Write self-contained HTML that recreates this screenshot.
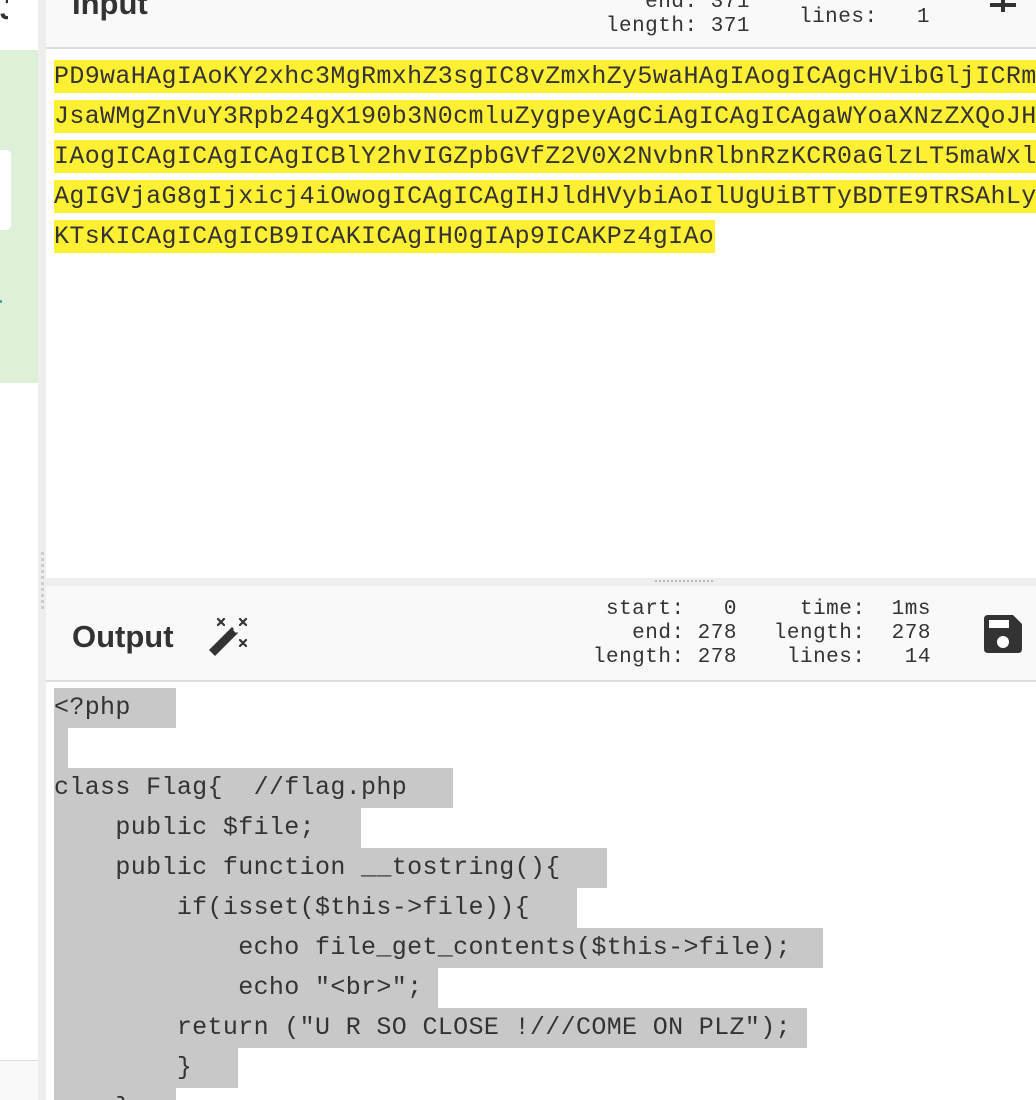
<!DOCTYPE html>
<html style="width:1036px;height:1100px;overflow:hidden"><head><meta charset="utf-8"><style>
*{margin:0;padding:0;box-sizing:border-box}
body{width:1036px;height:1100px;overflow:hidden;background:#fff;position:relative;font-family:"Liberation Sans",sans-serif;color:#333}
.abs{position:absolute}
.mono{font-family:"Liberation Mono","DejaVu Sans Mono",monospace;font-size:25px;letter-spacing:0.35px;white-space:pre;color:#333}
.in{position:absolute;left:54px;height:33px;line-height:33px;background:#fff033;overflow:hidden}
.out{position:absolute;left:54px;height:40px;line-height:40px;background:#c8c8c8;overflow:hidden}
.stat{position:absolute;font-family:"Liberation Mono",monospace;font-size:21px;letter-spacing:0.5px;white-space:pre;color:#333;text-align:right;line-height:24px}
.title{position:absolute;font-weight:bold;font-size:31px;color:#333}
</style></head><body>
<div class="abs" style="left:0;top:0;width:38px;height:50px;background:#fff"></div>
<div class="abs" style="left:0;top:0;width:8px;height:30px;font-weight:bold;font-size:28px;line-height:20px;overflow:hidden">J</div>
<div class="abs" style="left:0;top:50px;width:38px;height:333px;background:#dff0d8"></div>
<div class="abs" style="left:-10px;top:150px;width:21px;height:80px;background:#fff;border-radius:5px"></div>
<div class="abs" style="left:0;top:300px;width:2px;height:3px;background:#4a9"></div>
<div class="abs" style="left:0;top:1060px;width:38px;height:40px;background:#f9f9f9;border-top:1px solid #ddd"></div>
<div class="abs" style="left:38px;top:0;width:8px;height:1100px;background:#eee"></div>
<div class="abs" style="left:41px;top:552px;width:3px;height:60px;background:repeating-linear-gradient(#ccc 0 3px,transparent 3px 6px)"></div>

<div class="abs" style="left:46px;top:0;width:990px;height:49px;background:#f9f9f9;border-bottom:2px solid #ddd"></div>
<div class="title" style="left:72px;top:-14px">Input</div>
<div class="stat" style="left:560px;top:-9px;width:190px">end: 371
length: 371</div>
<div class="stat" style="left:780px;top:6px;width:150px">lines:   1</div>
<div class="abs" style="left:990px;top:3px;width:26px;height:4px;background:#333"></div>
<div class="abs" style="left:1001px;top:-10px;width:4px;height:22px;background:#333"></div>

<div class="in mono" style="top:60px;width:982px">PD9waHAgIAoKY2xhc3MgRmxhZ3sgIC8vZmxhZy5waHAgIAogICAgcHVibGljICRm</div>
<div class="in mono" style="top:100px;width:982px">JsaWMgZnVuY3Rpb24gX190b3N0cmluZygpeyAgCiAgICAgICAgaWYoaXNzZXQoJH</div>
<div class="in mono" style="top:140px;width:982px">IAogICAgICAgICAgICBlY2hvIGZpbGVfZ2V0X2NvbnRlbnRzKCR0aGlzLT5maWxl</div>
<div class="in mono" style="top:180px;width:982px">AgIGVjaG8gIjxicj4iOwogICAgICAgIHJldHVybiAoIlUgUiBTTyBDTE9TRSAhLy</div>
<div class="in mono" style="top:220px;width:661px">KTsKICAgICAgICB9ICAKICAgIH0gIAp9ICAKPz4gIAo</div>

<div class="abs" style="left:46px;top:578px;width:990px;height:8px;background:#eee"></div>
<div class="abs" style="left:655px;top:580px;width:60px;height:2px;background:repeating-linear-gradient(90deg,#bbb 0 2px,transparent 2px 4px)"></div>

<div class="abs" style="left:46px;top:586px;width:990px;height:96px;background:#f9f9f9;border-bottom:2px solid #ddd"></div>
<div class="title" style="left:72px;top:619px">Output</div>
<svg class="abs" style="left:205px;top:615px" width="50" height="45" viewBox="205 615 50 45">
<g stroke="#333" stroke-width="2.2" stroke-linecap="round">
<path d="M218 619l6 6M224 619l-6 6M240 619l6 6M246 619l-6 6M240 640l6 6M246 640l-6 6"/>
</g>
<path d="M232 627l6 6-23 23-6-6z" fill="#333"/>
<path d="M233 630l2.5-2.5 3 3-2.5 2.5z" fill="#fff"/>
</svg>
<div class="stat" style="left:560px;top:598px;width:177px">start:   0
end: 278
length: 278</div>
<div class="stat" style="left:740px;top:598px;width:191px">time:  1ms
length:  278
lines:   14</div>
<svg class="abs" style="left:984px;top:615px" width="38" height="38" viewBox="0 0 38 38">
<path d="M4 0H29L38 9V34Q38 38 34 38H4Q0 38 0 34V4Q0 0 4 0z" fill="#333"/>
<rect x="5" y="5" width="20" height="8" fill="#fff"/>
<circle cx="19" cy="27" r="6" fill="#fff"/>
</svg>

<div class="out mono" style="top:688px;width:122px">&lt;?php</div>
<div class="out" style="top:728px;width:14px"></div>
<div class="out mono" style="top:768px;width:399px">class Flag{  //flag.php</div>
<div class="out mono" style="top:808px;width:307px">    public $file;</div>
<div class="out mono" style="top:848px;width:553px">    public function __tostring(){</div>
<div class="out mono" style="top:888px;width:523px">        if(isset($this-&gt;file)){</div>
<div class="out mono" style="top:928px;width:769px">            echo file_get_contents($this-&gt;file);</div>
<div class="out mono" style="top:968px;width:384px">            echo "&lt;br&gt;";</div>
<div class="out mono" style="top:1008px;width:753px">        return ("U R SO CLOSE !///COME ON PLZ");</div>
<div class="out mono" style="top:1048px;width:184px">        }</div>
<div class="out mono" style="top:1088px;width:122px;height:12px">    }</div>
</body></html>
